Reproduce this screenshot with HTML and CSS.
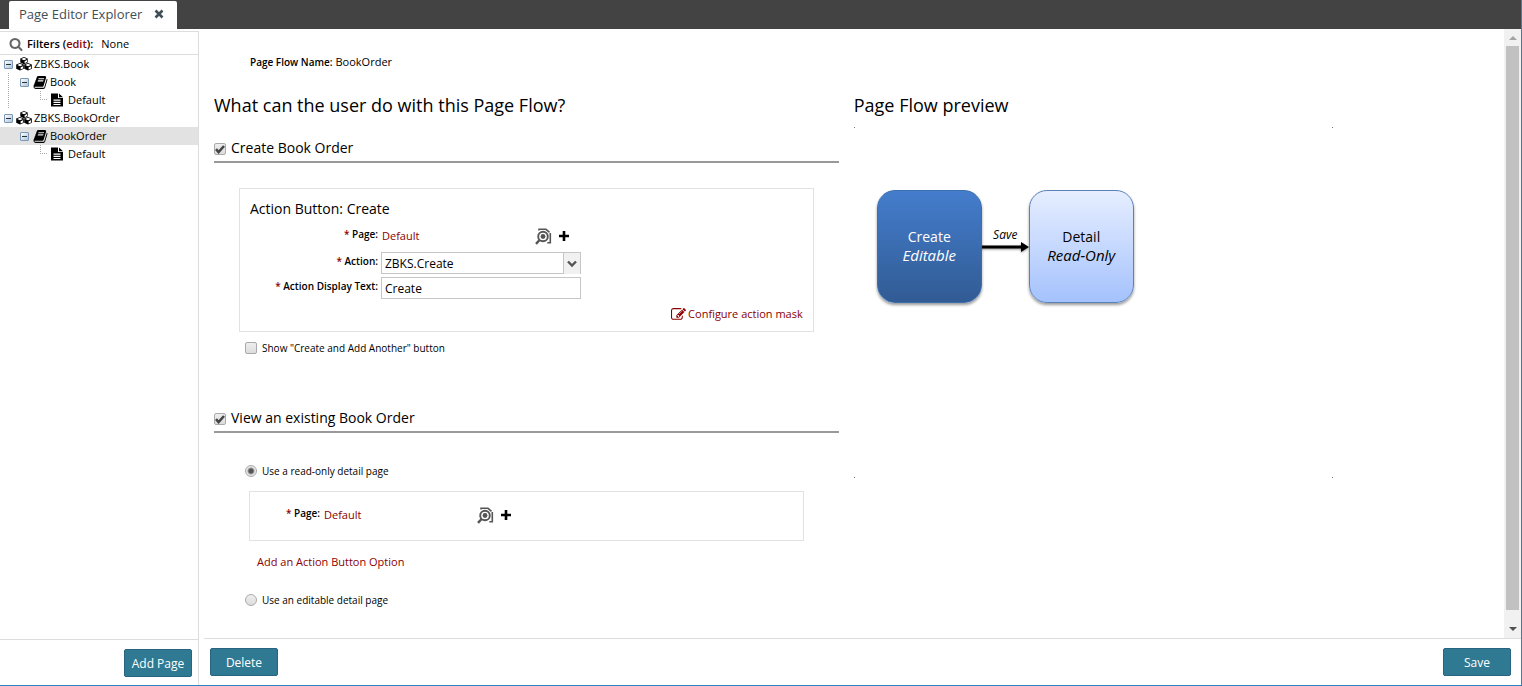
FILE: index.html
```
<!DOCTYPE html>
<html lang="en">
<head>
<meta charset="utf-8">
<title>Page Editor Explorer</title>
<link rel="stylesheet" href="styles.css">
</head>
<body>
<svg class="defs" aria-hidden="true">
  <symbol id="search" viewBox="0 0 1792 1792"><path d="M1216 832q0-185-131.5-316.5t-316.5-131.5-316.5 131.5-131.5 316.5 131.5 316.5 316.5 131.5 316.5-131.5 131.5-316.5zm512 832q0 52-38 90t-90 38q-54 0-90-38l-343-342q-179 124-399 124-143 0-273.5-55.5t-225-150-150-225-55.5-273.5 55.5-273.5 150-225 225-150 273.5-55.5 273.5 55.5 225 150 150 225 55.5 273.5q0 220-124 399l343 343q37 37 37 90z"/></symbol>
  <symbol id="book" viewBox="0 0 1792 1792"><path d="M1703 478q40 57 18 129l-275 906q-19 64-76.5 107.5t-122.5 43.5h-923q-77 0-148.5-53.5t-99.5-131.5q-24-67-2-127 0-4 3-27t4-37q1-8-3-21.5t-3-19.5q2-11 8-21t16.5-23.5 16.5-23.5q23-38 45-91.5t30-91.5q3-10 .5-30t-.5-28q3-11 17-28t17-23q21-36 42-92t25-90q1-9-2.5-32t.5-28q4-13 22-30.5t22-22.5q19-26 42.5-84.5t27.5-96.5q1-8-3-25.5t-2-26.5q2-8 9-18t18-23 17-21q8-12 16.5-30.5t15-35 16-36 19.5-32 26.5-23.5 36-11.5 47.5 5.5l-1 3q38-9 51-9h761q74 0 114 56t18 130l-274 906q-36 119-71.5 153.5t-128.5 34.5h-869q-27 0-38 15-11 16-1 43 24 70 144 70h923q29 0 56-15.5t35-41.5l300-987q7-22 5-57 38 15 59 43zm-1064 2q-4 13 2 22.5t20 9.5h608q13 0 25.5-9.5t16.5-22.5l21-64q4-13-2-22.5t-20-9.5h-608q-13 0-25.5 9.5t-16.5 22.5zm-83 256q-4 13 2 22.5t20 9.5h608q13 0 25.5-9.5t16.5-22.5l21-64q4-13-2-22.5t-20-9.5h-608q-13 0-25.5 9.5t-16.5 22.5z"/></symbol>
  <symbol id="edit" viewBox="0 0 1792 1792"><path d="M888 1184l116-116-152-152-116 116v56h96v96h56zm440-720q-16-16-33 1l-350 350q-17 17-1 33t33-1l350-350q17-17 1-33zm80 594v190q0 119-84.5 203.5t-203.5 84.5h-832q-119 0-203.5-84.5t-84.5-203.5v-832q0-119 84.5-203.5t203.5-84.5h832q63 0 117 25 15 7 18 23 3 17-9 29l-49 49q-14 14-32 8-23-6-45-6h-832q-66 0-113 47t-47 113v832q0 66 47 113t113 47h832q66 0 113-47t47-113v-126q0-13 9-22l64-64q15-15 35-7t20 29zm-96-738l288 288-672 672h-288v-288zm444 132l-92 92-288-288 92-92q28-28 68-28t68 28l152 152q28 28 28 68t-28 68z"/></symbol>
  <symbol id="file" viewBox="0 0 12 14"><path fill-rule="evenodd" d="M0 .5h7v4.500h5V13.500H0zM2.500 6.500v1.200h7V6.500zm0 2.200v1.200h7V8.700zm0 2.200v1.200h7v-1.200zM8 .5L12 4.200H8z"/></symbol>
  <symbol id="cubes" viewBox="0 0 16 14"><path d="M8 0l3.700 1.500v4L8 7.200 4.300 5.500v-4zM4 6l3.800 1.600v4.200L4 13.600.2 11.800V7.600zM12 6l3.800 1.600v4.200L12 13.600l-3.800-1.800V7.600z"/><path fill="#fff" d="M8 .8l2.800 1.200L8 3.300 5.200 2zM8.600 4.200l2.400-1.100v2l-2.400 1.100zM4 6.800L6.800 8 4 9.300 1.200 8zM4.600 10.300l2.400-1.100v2.200l-2.400 1.100zM12 6.800L14.800 8 12 9.300 9.200 8zM12.600 10.300l2.400-1.100v2.200l-2.400 1.100z"/></symbol>
  <symbol id="plus" viewBox="0 0 10 10"><path d="M3.700 0h2.600v3.700H10v2.600H6.300V10H3.700V6.300H0V3.700h3.700z"/></symbol>
  <symbol id="times" viewBox="0 0 10 10"><path d="M1.500 1.500l7 7m0-7l-7 7" stroke="currentColor" stroke-width="2.600"/></symbol>
  <symbol id="check" viewBox="0 0 12 12"><path d="M2 6.200l2.600 2.900L10 3" fill="none" stroke="#444" stroke-width="2.600"/></symbol>
  <symbol id="lookup" viewBox="0 0 17 17"><g fill="none" stroke="currentColor"><path d="M4 2.500V1.300h7l3.500 3" stroke-width="1.600"/><path d="M15.300 5v9.700h-3" stroke-width="1.600"/><circle cx="8" cy="8.500" r="4.800" stroke-width="1.900"/><path d="M4.600 12L1 15.800" stroke-width="2.400"/></g><circle cx="8" cy="8.500" r="2.400"/></symbol>
</svg>

<header class="tabs">
  <div class="tab"><span>Page Editor Explorer</span><button class="icon-btn tab-close" aria-label="Close tab"><svg class="i10"><use href="#times"/></svg></button></div>
</header>

<div class="workspace">
  <aside class="sidebar">
    <div class="filters">
      <svg class="i14 grey"><use href="#search"/></svg>
      <b>Filters (<a href="#">edit</a>):</b><span>None</span>
    </div>
    <ul class="tree">
      <li class="node"><button class="toggle" aria-label="Collapse"></button><svg class="cubes"><use href="#cubes"/></svg><span>ZBKS.Book</span></li>
      <li class="node level2 lined"><button class="toggle" aria-label="Collapse"></button><svg class="i15"><use href="#book"/></svg><span>Book</span></li>
      <li class="node level3 lined"><i class="elbow"></i><svg class="file"><use href="#file"/></svg><span>Default</span></li>
      <li class="node"><button class="toggle" aria-label="Collapse"></button><svg class="cubes"><use href="#cubes"/></svg><span>ZBKS.BookOrder</span></li>
      <li class="node level2 selected"><button class="toggle" aria-label="Collapse"></button><svg class="i15"><use href="#book"/></svg><span>BookOrder</span></li>
      <li class="node level3"><i class="elbow"></i><svg class="file"><use href="#file"/></svg><span>Default</span></li>
    </ul>
    <footer class="side-foot"><button class="btn">Add Page</button></footer>
  </aside>

  <main class="main">
    <div class="viewport">
      <div class="content">
        <p class="flow-name"><b>Page Flow Name:</b><span>BookOrder</span></p>
        <div class="columns">
          <section>
            <h1>What can the user do with this Page Flow?</h1>

            <h2><span class="check"><input type="checkbox" id="can-create" checked><svg><use href="#check"/></svg></span><label for="can-create">Create Book Order</label></h2>
            <div class="panel">
              <h3>Action Button: Create</h3>
              <div class="form">
                <span class="label"><em>*</em> Page:</span>
                <div class="field lookup-field"><a href="#">Default</a><button class="icon-btn" aria-label="Find page"><svg class="i17 dark"><use href="#lookup"/></svg></button><button class="icon-btn" aria-label="Add page"><svg class="i10"><use href="#plus"/></svg></button></div>
                <label class="label" for="action"><em>*</em> Action:</label>
                <div class="field select"><select id="action"><option>ZBKS.Create</option></select><span class="arrow"><svg class="i10" viewBox="0 0 10 10"><path d="M1 2.500l4 4 4-4" fill="none" stroke="#555" stroke-width="2.400"/></svg></span></div>
                <label class="label" for="display-text"><em>*</em> Action Display Text:</label>
                <input class="field text" id="display-text" type="text" value="Create">
              </div>
              <a class="mask" href="#"><svg class="i15"><use href="#edit"/></svg>Configure action mask</a>
            </div>
            <div class="option after-panel"><input type="checkbox" id="another"><label for="another">Show "Create and Add Another" button</label></div>

            <h2 class="second"><span class="check"><input type="checkbox" id="can-view" checked><svg><use href="#check"/></svg></span><label for="can-view">View an existing Book Order</label></h2>
            <div class="option"><input type="radio" name="detail" id="readonly" checked><label for="readonly">Use a read-only detail page</label></div>
            <div class="panel small">
              <div class="form">
                <span class="label"><em>*</em> Page:</span>
                <div class="field lookup-field"><a href="#">Default</a><button class="icon-btn" aria-label="Find page"><svg class="i17 dark"><use href="#lookup"/></svg></button><button class="icon-btn" aria-label="Add page"><svg class="i10"><use href="#plus"/></svg></button></div>
              </div>
            </div>
            <a class="add-option" href="#">Add an Action Button Option</a>
            <div class="option"><input type="radio" name="detail" id="editable"><label for="editable">Use an editable detail page</label></div>
          </section>

          <section>
            <h1>Page Flow preview</h1>
            <div class="preview">
              <div class="step create"><span>Create</span><i>Editable</i></div>
              <div class="link"><i>Save</i><svg viewBox="0 0 47 14" preserveAspectRatio="none"><path d="M0 4.500h39V1l8 5-8 5V7.500H0z"/></svg></div>
              <div class="step detail"><span>Detail</span><i>Read-Only</i></div>
            </div>
          </section>
        </div>
      </div>
      <div class="scroll" aria-hidden="true">
        <svg viewBox="0 0 17 17"><path d="M5 11l4-4 4 4z" fill="#a3a3a3"/></svg>
        <div class="thumb"></div>
        <svg viewBox="0 0 17 17"><path d="M5 6h8l-4 4z" fill="#505050"/></svg>
      </div>
    </div>
    <footer class="main-foot"><button class="btn">Delete</button><button class="btn">Save</button></footer>
  </main>
</div>
</body>
</html>
```
FILE: styles.css
```
* { box-sizing: border-box; }
body {
  margin: 0;
  min-height: 100vh;
  display: flex;
  flex-direction: column;
  font: 11px/20px "Open Sans", sans-serif;
  color: #000;
  background: #fff;
  border-right: 1px solid #2f7fc1;
  border-bottom: 1px solid #2f7fc1;
}
h1, h2, h3, p, ul { margin: 0; padding: 0; font-weight: 400; }
a { color: #8b0000; text-decoration: none; }
button, input, select { font: inherit; color: inherit; margin: 0; }
svg { fill: currentColor; flex: none; display: block; }
.defs { position: absolute; width: 0; height: 0; }
.i10 { width: 10px; height: 10px; }
.i14 { width: 14px; height: 14px; }
.i15 { width: 15px; height: 15px; }
.i17 { width: 17px; height: 17px; }
.grey { color: #666; }
.dark { color: #555; }
.icon-btn { border: 0; padding: 0; background: none; }

.tabs { background: #434343; padding: 1px 9px 0; height: 29px; }
.tab {
  display: inline-flex;
  align-items: center;
  gap: 12px;
  height: 28px;
  padding: 0 13px 2px 10px;
  background: #fff;
  border-radius: 2px 2px 0 0;
  font-size: 13px;
  color: #3f4f58;
}

.workspace { flex: 1; display: flex; }
.sidebar {
  width: 199px;
  flex: none;
  margin-top: 2px;
  border-top: 1px solid #ddd;
  border-right: 1px solid #ddd;
  display: flex;
  flex-direction: column;
}
.filters {
  display: flex;
  align-items: center;
  height: 23px;
  padding: 2px 0 0 9px;
  border-bottom: 1px solid #ddd;
}
.filters b { margin: 0 8px 0 4px; font-weight: 600; }
.tree { flex: 1; list-style: none; }
.node {
  display: flex;
  align-items: center;
  height: 18px;
  padding-left: 4px;
}
.node span { padding-left: 2px; }
.level2 { padding-left: 20px; }
.level2 .i15 { margin: 0 1px 0 -3px; }
.level3 { padding-left: 40px; }
.level3 span { padding-left: 5px; }
.selected { background: #e2e2e2; }
.lined { background: repeating-linear-gradient(#aaa 0 1px, transparent 1px 2px) 8px 0 / 1px 100% no-repeat; }
.toggle {
  width: 9px;
  height: 9px;
  padding: 0;
  margin-right: 3px;
  flex: none;
  border: 1px solid #7898b5;
  border-radius: 1px;
  background: linear-gradient(#234, #234) center / 5px 1px no-repeat, linear-gradient(135deg, #fff, #b3c3d5);
}
.level2 .toggle { margin-right: 7px; }
.level2 span { padding-left: 1px; }
.cubes { width: 16px; height: 14px; }
.file { width: 12px; height: 14px; }
.elbow {
  width: 7px;
  height: 9px;
  margin-right: 4px;
  align-self: flex-start;
  border-left: 1px dotted #aaa;
  border-bottom: 1px dotted #aaa;
}
.btn {
  min-width: 68px;
  height: 28px;
  padding: 1px 6px 0;
  border: 1px solid #28647f;
  border-radius: 2px;
  background: #2f7a92;
  color: #fff;
  font-size: 12px;
  font-weight: 500;
}
.side-foot {
  height: 46px;
  padding: 9px 6px;
  border-top: 1px solid #ddd;
  text-align: right;
}

.main { flex: 1; display: flex; flex-direction: column; }
.viewport { flex: 1; display: flex; }
.content { flex: 1; padding: 21px 0 20px 15px; }
.flow-name { display: flex; gap: 3px; height: 24px; padding-left: 36px; line-height: 24px; }
.flow-name b, .label { font-size: 10px; font-weight: 600; }
.columns { display: grid; grid-template-columns: 49fr 51fr; gap: 15px; padding-top: 19px; }
h1 { font-size: 18px; line-height: 24px; }
h2 {
  display: flex;
  align-items: center;
  gap: 5px;
  margin: 19px 0 25px;
  padding-bottom: 1px;
  border-bottom: 2px solid #999;
  font-size: 14px;
  line-height: 24px;
}
h2.second { margin: 48px 0 28px; }
h3 { font-size: 14px; line-height: 20px; }

input[type="checkbox"], input[type="radio"] {
  appearance: none;
  width: 12px;
  height: 12px;
  flex: none;
  border: 1px solid #aaa;
  border-radius: 2px;
  background: linear-gradient(#eee, #ddd);
}
input[type="radio"] { border-radius: 50%; }
input[type="radio"]:checked { background: radial-gradient(#555 0 2px, #e6e6e6 4px); }
.check { display: grid; padding-top: 2px; }
.check input, .check svg { grid-area: 1 / 1; width: 12px; height: 12px; }
.check svg { pointer-events: none; }
.check input:not(:checked) + svg { display: none; }

.panel { margin: 0 25px; padding: 10px 10px 7px; border: 1px solid #e2e2e2; }
.form { display: grid; grid-template-columns: 128px 200px; gap: 3px; padding-top: 6px; }
.label { text-align: right; line-height: 18px; }
.label em { font-style: normal; color: #8b0000; }
.field { height: 22px; }
.lookup-field { display: flex; align-items: center; gap: 7px; height: 24px; padding: 0 12px 2px 1px; }
.lookup-field a { flex: 1; }
.text, .select { border: 1px solid #c6c6c6; background: #fff; }
.text { width: 100%; padding: 0 3px; font-size: 12px; }
.select { display: grid; grid-template-columns: 1fr 17px; }
.select select {
  grid-area: 1 / 1 / 2 / 3;
  appearance: none;
  border: 0;
  padding: 1px 3px 0;
  background: none;
  font-size: 12px;
}
.arrow {
  grid-area: 1 / 2;
  display: flex;
  align-items: center;
  justify-content: center;
  border-left: 1px solid #c6c6c6;
  background: #f1f1f1;
  pointer-events: none;
}
.mask { display: flex; justify-content: flex-end; align-items: center; gap: 2px; margin-top: 5px; }
.option { display: flex; align-items: center; gap: 5px; padding-left: 31px; font-size: 10px; }
.after-panel { margin-top: 6px; }
.small { margin: 10px 35px 11px; padding: 11px 0; }
.small .form { grid-template-columns: 70px 200px; padding: 1px 0; }
.add-option { display: block; margin: 0 0 18px 43px; }

.preview {
  display: flex;
  align-items: flex-start;
  width: 75%;
  max-width: 479px;
  height: 351px;
  margin-top: 10px;
  padding: 63px 23px;
  background:
    linear-gradient(#777, #777) 0 0 / 1px 1px no-repeat,
    linear-gradient(#777, #777) 100% 0 / 1px 1px no-repeat,
    linear-gradient(#777, #777) 0 100% / 1px 1px no-repeat,
    linear-gradient(#777, #777) 100% 100% / 1px 1px no-repeat;
}
.step {
  display: flex;
  flex-direction: column;
  align-items: center;
  justify-content: center;
  width: 105px;
  height: 113px;
  padding-bottom: 2px;
  border: 1px solid #5a82b8;
  border-radius: 18px;
  box-shadow: 0 2px 3px rgba(0, 0, 0, .4);
  font-size: 14px;
  line-height: 19px;
}
.step i { font-size: 15px; }
.create { border-color: #3c6fae; background: linear-gradient(#447dcc, #315b94); color: #fff; }
.detail { background: linear-gradient(#e6eeff, #a5c2fd); }
.link { width: 47px; padding-top: 36px; text-align: center; font-size: 12px; line-height: 18px; }
.link svg { width: 47px; height: 14px; margin-top: -3px; filter: drop-shadow(0 1px 1px rgba(0, 0, 0, .4)); }

.scroll { width: 17px; display: flex; flex-direction: column; background: #f1f1f1; }
.scroll svg { width: 17px; height: 17px; }
.thumb { flex: 1; margin: 0 2px 11px; background: #c1c1c1; }
.main-foot {
  display: flex;
  justify-content: space-between;
  height: 47px;
  margin-left: 5px;
  padding: 9px 10px 9px 6px;
  border-top: 1px solid #ddd;
}
```
